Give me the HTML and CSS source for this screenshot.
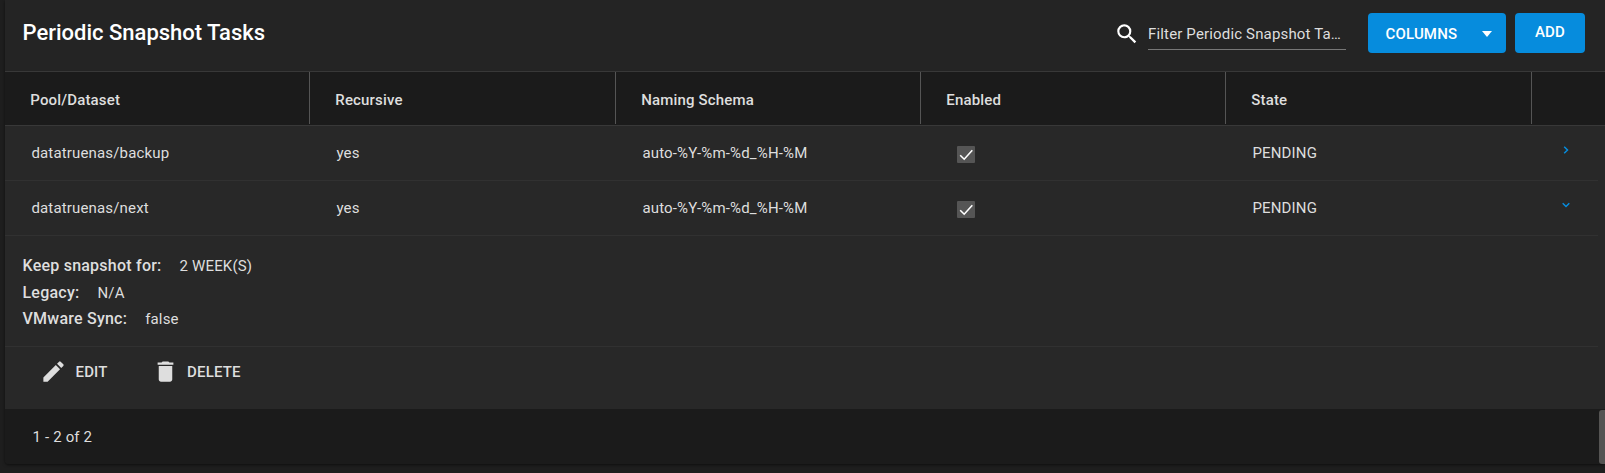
FILE: index.html
```html
<!DOCTYPE html>
<html lang="en">
<head>
<meta charset="utf-8">
<title>Periodic Snapshot Tasks</title>
<link rel="stylesheet" href="styles.css">
</head>
<body>
<main class="card">
  <header class="toolbar">
    <h1 class="title">Periodic Snapshot Tasks</h1>
    <svg class="search-icon" viewBox="0 0 24 24"><path d="M15.5 14h-.79l-.28-.27A6.47 6.47 0 0 0 16 9.5 6.5 6.5 0 1 0 9.5 16c1.61 0 3.09-.59 4.23-1.57l.27.28v.79l5 4.99L20.49 19l-4.99-5zm-6 0C7.01 14 5 11.99 5 9.500S7.010 5 9.500 5 14 7.010 14 9.500 11.990 14 9.500 14z"/></svg>
    <div class="filter">Filter Periodic Snapshot Ta…</div>
    <button class="btn btn-columns"><span>COLUMNS</span><i class="caret"></i></button>
    <button class="btn btn-add">ADD</button>
  </header>
  <div class="grid head">
    <div class="th">Pool/Dataset</div>
    <div class="th">Recursive</div>
    <div class="th">Naming Schema</div>
    <div class="th">Enabled</div>
    <div class="th">State</div>
    <div></div>
  </div>
  <section class="body">
    <div class="grid row">
      <div class="td">datatruenas/backup</div>
      <div class="td">yes</div>
      <div class="td">auto-%Y-%m-%d_%H-%M</div>
      <div class="td check"><svg class="box" viewBox="0 0 18 17"><path d="M3.200 9.300l4 3.900L15.300 4.300"/></svg></div>
      <div class="td">PENDING</div>
      <div class="toggle"><svg class="chevron" viewBox="0 0 8 8"><path d="M2.200.7L5.500 4 2.200 7.300"/></svg></div>
    </div>
    <div class="grid row">
      <div class="td">datatruenas/next</div>
      <div class="td">yes</div>
      <div class="td">auto-%Y-%m-%d_%H-%M</div>
      <div class="td check"><svg class="box" viewBox="0 0 18 17"><path d="M3.200 9.300l4 3.900L15.300 4.300"/></svg></div>
      <div class="td">PENDING</div>
      <div class="toggle"><svg class="chevron" viewBox="0 0 8 8"><path d="M.7 2.200L4 5.500 7.300 2.200"/></svg></div>
    </div>
    <dl class="details">
      <div class="pair"><dt>Keep snapshot for:</dt><dd>2 WEEK(S)</dd></div>
      <div class="pair"><dt>Legacy:</dt><dd>N/A</dd></div>
      <div class="pair"><dt>VMware Sync:</dt><dd>false</dd></div>
    </dl>
    <div class="actions">
      <button class="action action-edit"><svg class="action-icon" viewBox="0 0 24 24"><path d="M3 17.250V21h3.750L17.810 9.940l-3.750-3.750L3 17.250zM20.710 7.040a1 1 0 0 0 0-1.410l-2.340-2.340a1 1 0 0 0-1.410 0l-1.830 1.830 3.750 3.750 1.830-1.830z"/></svg>EDIT</button>
      <button class="action"><svg class="action-icon" viewBox="0 0 24 24"><path d="M6 19c0 1.100.9 2 2 2h8c1.100 0 2-.9 2-2V7H6v12zM19 4h-3.500l-1-1h-5l-1 1H5v2h14V4z"/></svg>DELETE</button>
    </div>
  </section>
  <footer class="footer"><span>1 - 2 of 2</span><i class="thumb"></i></footer>
</main>
</body>
</html>
```
FILE: styles.css
```css
* { box-sizing: border-box; }
body {
  margin: 0;
  height: 473px;
  overflow: hidden;
  background: #1e1e1e;
  color: #dedede;
  font: 400 15px/20px Roboto, sans-serif;
  letter-spacing: .16px;
}
button { font: inherit; letter-spacing: inherit; color: inherit; border: 0; padding: 0; background: none; }
.card { margin-left: 5px; box-shadow: 0 1px 3px #0008; border-radius: 0 0 0 4px; }
.toolbar {
  display: flex;
  align-items: flex-start;
  height: 72px;
  padding: 13px 20px 0 17.5px;
  background: #242424;
  border-bottom: 1px solid #383838;
}
.title { margin: 6px auto 0 0; font-size: 22px; line-height: 28px; font-weight: 500; letter-spacing: 0; color: #fff; }
.search-icon { width: 26px; height: 26px; margin: 8px 8px 0 0; fill: #fff; }
.filter {
  width: 198px;
  height: 37px;
  margin-right: 22px;
  padding-top: 11px;
  border-bottom: 1px solid #777;
  white-space: nowrap;
}
.btn { height: 40px; border-radius: 4px; background: #068cdd; color: #fff; font-weight: 500; }
.btn-columns { display: flex; align-items: center; justify-content: space-between; width: 138px; margin-right: 9px; padding: 1px 14px 0 17.5px; }
.caret { border: 5.5px solid transparent; border-top: 6px solid #fff; border-bottom: 0; }
.btn-add { width: 70px; padding-bottom: 2px; }
.grid { display: grid; grid-template-columns: 305px 306px 305px 305px 306px 1fr; }
.head { height: 54px; background: #1b1b1b; border-bottom: 1px solid #383838; }
.th { height: 52px; padding: 18px 0 0 25.3px; border-right: 1px solid #555; font-weight: 500; }
.body { background: #282828; }
.row, .details { margin-right: 7px; border-bottom: 1px solid #313131; }
.row { height: 55px; }
.td { padding: 17px 0 0 26.4px; }
.check { padding: 20px 0 0 36px; }
.box { display: block; width: 18px; height: 17px; background: #555; border-radius: 1px; }
.box path { fill: none; stroke: #fff; stroke-width: 1.6; }
.toggle { padding: 20px 0 0 30px; }
.chevron { display: block; width: 8px; height: 8px; }
.chevron path { fill: none; stroke: #068cdd; stroke-width: 1.5; }
.details { height: 111px; margin-top: 0; margin-bottom: 0; padding: 17px 0 0 17.5px; }
.pair { display: flex; height: 26.500px; line-height: 26px; }
.pair dt { font-size: 16px; font-weight: 500; letter-spacing: .23px; }
.pair dd { margin: 0 0 0 18px; }
.actions { display: flex; gap: 44px; height: 62px; padding: 11px 0 0 35px; }
.action { display: flex; align-items: center; gap: 8.5px; height: 27px; font-weight: 500; }
.action-icon { width: 27px; height: 27px; fill: #dedede; }
.footer { display: flex; justify-content: space-between; height: 55px; padding: 1px 0 0 27.5px; background: #1b1b1b; line-height: 54px; border-radius: 0 0 0 4px; }
.thumb { width: 6px; height: 54px; background: #555453; border-radius: 3px 0 0 3px; }
```
